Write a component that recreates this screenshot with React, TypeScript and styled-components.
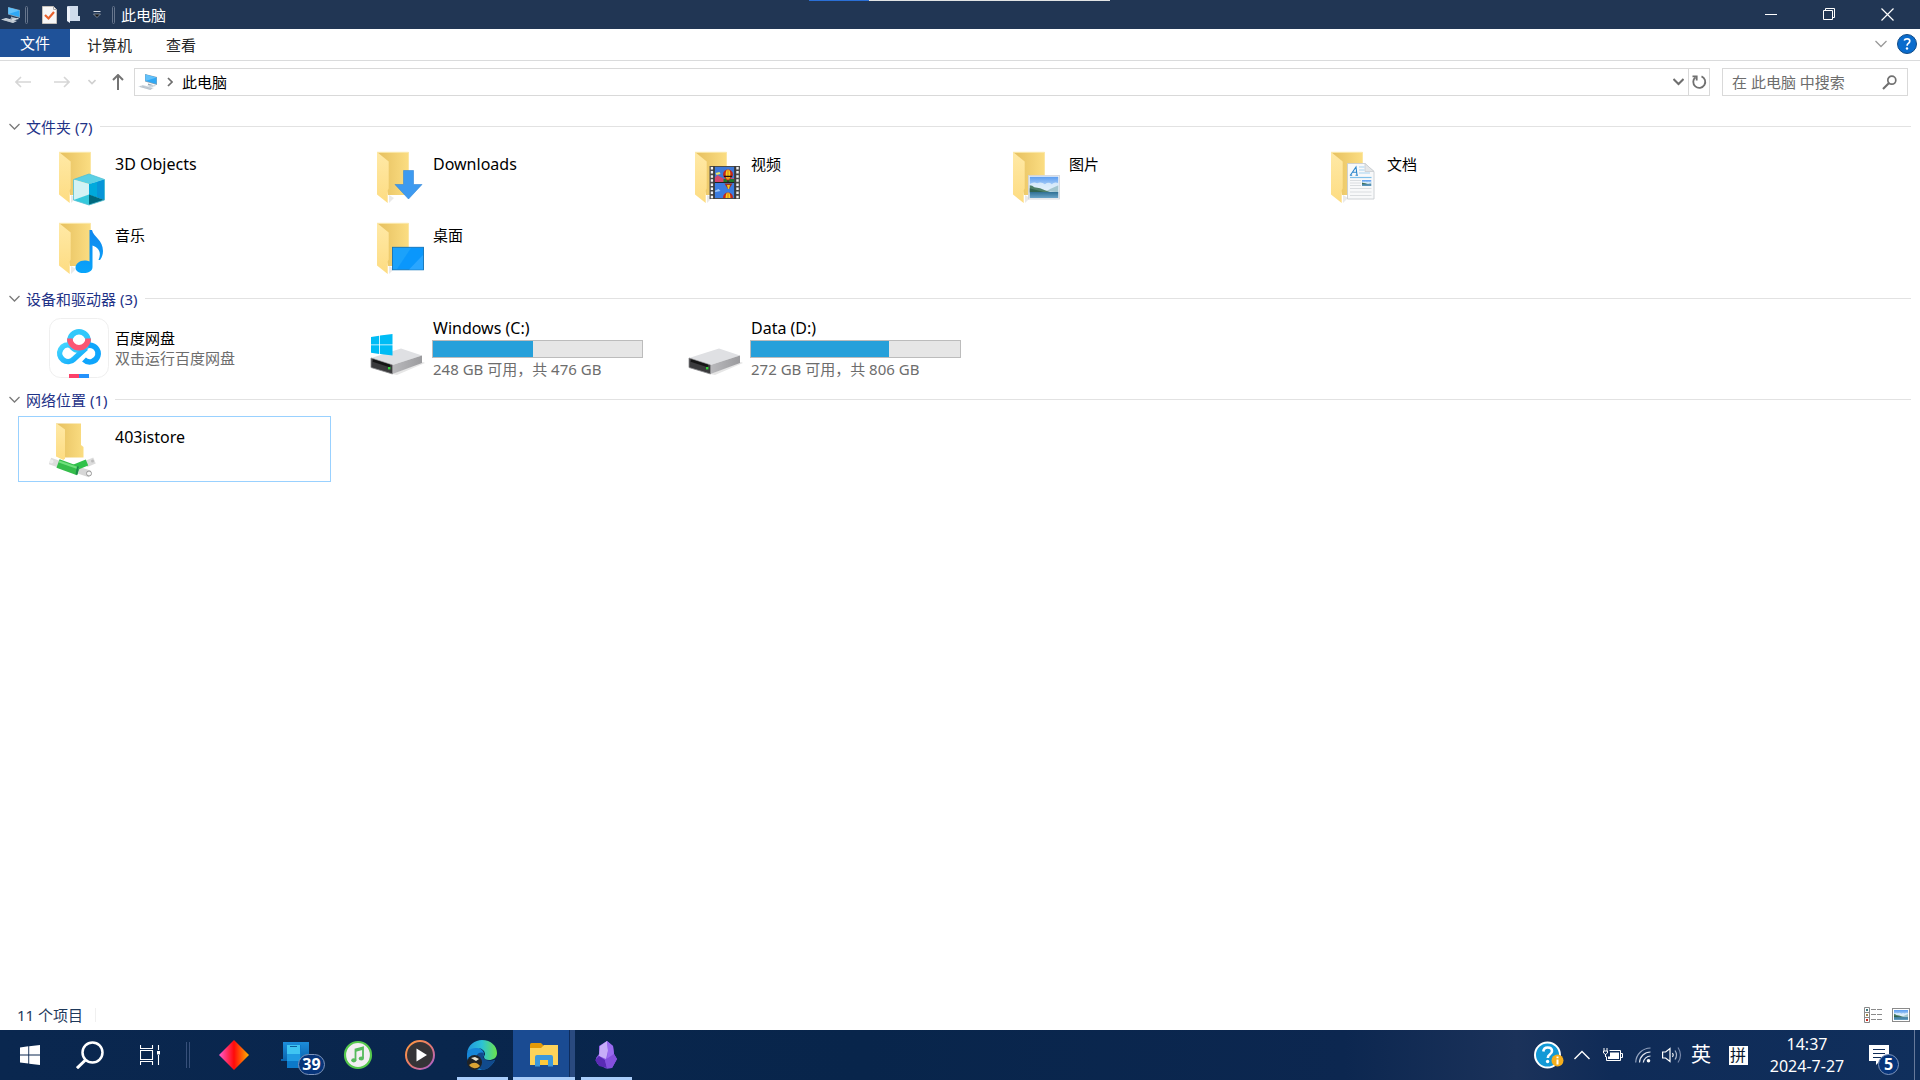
import React from "react";
import styled, { createGlobalStyle } from "styled-components";

const Global = createGlobalStyle`
  *, *::before, *::after { box-sizing: border-box; }
  body { margin: 0; background: #fff; }
  body, button, input {
    font-family: "Noto Sans", "Noto Sans CJK SC", sans-serif;
    font-size: 15px;
    line-height: 20px;
    color: #000;
  }
  button { border: 0; padding: 0; background: none; cursor: default; }
  svg { display: block; flex: none; }
`;

/* ---------- layout ---------- */

const Screen = styled.div`
  display: flex;
  flex-direction: column;
  min-height: 100vh;
`;

const TitleBar = styled.header`
  position: relative;
  display: flex;
  align-items: center;
  height: 29px;
  background: #213654;
  padding: 0 4px 0 1px;
`;

const SnapStrip = styled.div`
  position: absolute;
  top: 0;
  left: 50%;
  width: 301px;
  height: 1px;
  margin-left: -151px;
  background: linear-gradient(90deg, #2a6fd6 60px, #e2e4e4 60px);
`;

const TitleDivider = styled.span<{ $left: number; $right: number }>`
  width: 3px;
  height: 18px;
  margin: 0 ${(p) => p.$right}px 0 ${(p) => p.$left}px;
  border: 1px solid #66758c;
  border-radius: 2px;
`;

const QuickButton = styled.button`
  display: grid;
  place-items: center;
  width: 24px;
  height: 24px;
`;

const Title = styled.h1`
  margin: 0;
  flex: 1;
  font-size: 15px;
  font-weight: 400;
  line-height: 20px;
  color: #fff;
`;

const CaptionButton = styled.button`
  display: grid;
  place-items: center;
  width: 58px;
  height: 28px;
`;

const Ribbon = styled.nav`
  display: flex;
  align-items: flex-start;
  height: 32px;
  border-bottom: 1px solid #dadbdc;
`;

const RibbonTab = styled.button<{ $primary?: boolean }>`
  height: ${(p) => (p.$primary ? 28 : 31)}px;
  padding: 0 ${(p) => (p.$primary ? 20 : 17)}px;
  background: ${(p) => (p.$primary ? "#1f5299" : "transparent")};
  color: ${(p) => (p.$primary ? "#fff" : "#262626")};
`;

const RibbonTools = styled.div`
  display: flex;
  align-items: center;
  gap: 10px;
  height: 30px;
  margin-left: auto;
  padding-right: 3px;
`;

const NavRow = styled.div`
  display: flex;
  align-items: center;
  padding: 7px 12px 7px 4px;
`;

const NavButton = styled.button<{ $w: number }>`
  display: grid;
  place-items: center;
  width: ${(p) => p.$w}px;
  height: 28px;
`;

const AddressBox = styled.div`
  display: flex;
  align-items: center;
  flex: 1;
  height: 28px;
  margin-right: 12px;
  padding-left: 3px;
  border: 1px solid #d9d9d9;
`;

const Crumb = styled.button`
  margin-right: auto;
`;

const CrumbArrow = styled.button`
  display: grid;
  place-items: center;
  width: 24px;
  height: 26px;
`;

const AddressButton = styled.button<{ $divided?: boolean }>`
  display: grid;
  place-items: center;
  width: ${(p) => (p.$divided ? 21 : 20)}px;
  height: 26px;
  border-left: ${(p) => (p.$divided ? "1px solid #d9d9d9" : "0")};
`;

const SearchBox = styled.label`
  display: flex;
  align-items: center;
  width: 186px;
  height: 28px;
  padding: 0 10px 0 9px;
  border: 1px solid #d9d9d9;
`;

const SearchInput = styled.input`
  flex: 1;
  min-width: 0;
  padding: 0;
  border: 0;
  outline: 0;
  background: transparent;
  &::placeholder { color: #6d6d6d; opacity: 1; }
`;

const Content = styled.main`
  display: flex;
  flex-direction: column;
  gap: 2px;
  flex: 1;
  padding: 7px 9px 0 9px;
`;

const GroupHeader = styled.button`
  display: flex;
  align-items: center;
  width: 100%;
  height: 33px;
  color: #1e3287;
  &::after {
    content: "";
    flex: 1;
    height: 1px;
    margin-left: 8px;
    background: #e2e2e2;
  }
  svg { margin-right: 6px; }
`;

const ItemGrid = styled.div`
  display: grid;
  grid-template-columns: repeat(auto-fill, 313px);
  gap: 5px;
  padding-left: 9px;
`;

const Item = styled.button<{ $focused?: boolean; $middle?: boolean }>`
  display: flex;
  align-items: ${(p) => (p.$middle ? "center" : "flex-start")};
  gap: 4px;
  height: 66px;
  padding: ${(p) => (p.$middle ? 0 : 2)}px 0 0 30px;
  border: 1px solid ${(p) => (p.$focused ? "#99d1ff" : "transparent")};
  text-align: left;
`;

const ItemText = styled.span<{ $top?: boolean }>`
  display: flex;
  flex-direction: column;
  padding-top: ${(p) => (p.$top ? 8 : 0)}px;
`;

const ItemName = styled.span<{ $latin?: boolean }>`
  padding-left: 1px;
  font-size: ${(p) => (p.$latin ? 16 : 15)}px;
`;

const ItemNote = styled.span`
  padding-left: 1px;
  color: #6d6d6d;
`;

const Gauge = styled.span`
  display: block;
  width: 211px;
  height: 18px;
  margin: 2px 0 1px;
  border: 1px solid #bcbcbc;
  background: #e6e6e6;
`;

const GaugeFill = styled.span`
  display: block;
  height: 100%;
  background: #26a0da;
`;

const StatusBar = styled.footer`
  display: flex;
  align-items: center;
  height: 30px;
  padding: 0 10px 0 17px;
  color: #1e395b;
`;

const StatusText = styled.span`
  padding-right: 12px;
  margin-right: auto;
  border-right: 1px solid #f0f0f0;
  line-height: 14px;
`;

const StatusButton = styled.button`
  margin-left: 10px;
`;

const Taskbar = styled.footer`
  display: flex;
  height: 50px;
  background: linear-gradient(90deg, #0a274f 0%, #08254b 45%, #0c2750 70%, #1b325a 79%, #0f2b57 84%, #102f5c 100%);
`;

const TaskButton = styled.button<{ $w?: number; $state?: "open" | "active" }>`
  position: relative;
  display: grid;
  place-items: center;
  width: ${(p) => p.$w ?? 62}px;
  height: 50px;
  background: ${(p) =>
    p.$state === "active" ? "linear-gradient(90deg, #1a4b92 56px, #0e2c5c 56px, #0e2c5c 57px, #2a4a7f 57px)" : "transparent"};
  &::after {
    content: "";
    display: ${(p) => (p.$state ? "block" : "none")};
    position: absolute;
    bottom: 0;
    left: ${(p) => (p.$state === "active" ? 0 : 6)}px;
    right: ${(p) => (p.$state === "active" ? 0 : 5)}px;
    height: 3px;
    background: #a9cdfa;
  }
`;

const TaskDivider = styled.span`
  align-self: center;
  width: 4px;
  height: 26px;
  margin: 0 13px 0 6px;
  border: solid #37507a;
  border-width: 0 1px;
`;

const Badge = styled.span<{ $wide?: boolean }>`
  position: absolute;
  left: ${(p) => (p.$wide ? 33 : 24)}px;
  top: 24px;
  width: ${(p) => (p.$wide ? 27 : 21)}px;
  height: 21px;
  border: 1px solid #7f95bb;
  border-radius: 11px;
  background: #06347a;
  color: #fff;
  font-size: 16px;
  font-weight: 700;
  line-height: 18px;
  text-align: center;
`;

const Tray = styled.div`
  display: flex;
  align-items: center;
  margin-left: auto;
`;

const TrayButton = styled.button<{ $w: number; $inset?: number }>`
  position: relative;
  display: grid;
  place-items: center;
  width: ${(p) => p.$w}px;
  height: 50px;
  padding-right: ${(p) => p.$inset ?? 0}px;
  color: #fff;
  font-size: 20px;
`;

const ImeMode = styled.span`
  display: grid;
  place-items: center;
  width: 19px;
  height: 19px;
  background: #fff;
  color: #08182f;
  font-size: 16px;
  line-height: 19px;
`;

const Clock = styled.button`
  display: flex;
  flex-direction: column;
  align-items: center;
  width: 94px;
  color: #fff;
  font-size: 16px;
  line-height: 22px;
`;

const ShowDesktop = styled.button`
  width: 6px;
  height: 50px;
  border-left: 1px solid #66799a;
`;

/* ---------- small icons ---------- */

const PcIcon = () => (
  <svg width="20" height="18" viewBox="0 0 20 18">
    <path d="M7 1l12 3v8L7 8.500z" fill="#8fa2b0" />
    <path d="M7.500 1.500l11 3v6.500l-11-3z" fill="#2fa8f5" />
    <path d="M7.500 1.500l11 3-11 3.500z" fill="#62c1fa" />
    <path d="M10 10.500l5 1.500v2l-5-2z" fill="#9babb8" />
    <path d="M9 12.500l8-.500 1 1-6 1.500z" fill="#cfd8df" />
    <path d="M0 13.500l5-1.500 11 3-4 2z" fill="#d5dce3" />
    <path d="M2 13.500l11 3M4 13l10 2.700" stroke="#a9b5c0" strokeWidth=".6" />
  </svg>
);

const Chevron = ({ w = 11, color = "#7a7a7a", weight = 1.3, up = false }) => (
  <svg width={w} height={w / 2 + 2} viewBox={`0 0 ${w} ${w / 2 + 2}`} fill="none" stroke={color} strokeWidth={weight}>
    <path d={up ? `M.5 ${w / 2 + 1}L${w / 2} 1.500 ${w - 0.5} ${w / 2 + 1}` : `M.5 1L${w / 2} ${w / 2 + 0.5} ${w - 0.5} 1`} />
  </svg>
);

const Arrow = ({ dir }: { dir: "left" | "right" | "up" }) => {
  const turn = { left: 0, right: 180, up: 90 }[dir];
  const up = dir === "up";
  return (
    <svg width="16" height="16" viewBox="0 0 16 16" fill="none" stroke={up ? "#737373" : "#d6d6d6"} strokeWidth={up ? 2 : 1.6}>
      <path transform={`rotate(${turn} 8 8)`} d="M6 3L1 8l5 5M1 8h15" />
    </svg>
  );
};

const WindowGlyph = ({ kind }: { kind: "min" | "restore" | "close" }) => (
  <svg width="13" height="13" viewBox="0 0 13 13" fill="none" stroke="#fff" strokeWidth="1">
    {kind === "min" && <path d="M0 6.500h12" />}
    {kind === "restore" && <path d="M.5 2.500h9v9h-9zM2.500 2.500v-2h9v9h-2" />}
    {kind === "close" && <path d="M.5.5l12 12M12.500.5l-12 12" strokeWidth="1.200" />}
  </svg>
);

const Landscape = ({ x, y, w, h }: { x: number; y: number; w: number; h: number }) => (
  <svg x={x} y={y} width={w} height={h} viewBox="0 0 30 22" preserveAspectRatio="none">
    <rect width="30" height="22" fill="url(#sky)" />
    <path d="M0 8q4-3 8-1 4-2 8 1 4-3 7 0 3-3 7-1v8H0z" fill="#e3f1fb" opacity=".8" />
    <path d="M17 15l6-3 7-3v7z" fill="#a3c6cf" />
    <path d="M0 9q3 0 5 2l6 1 5 2 6 2H0z" fill="#4d7f68" />
    <path d="M0 12l8 2 8 2H0z" fill="#2f6350" />
    <path d="M0 15.800h30V22H0z" fill="url(#lake)" />
  </svg>
);

/* ---------- large icons, drawn in a 60 x 60 box ---------- */

const Big = ({ children }: { children: React.ReactNode }) => (
  <svg width="61" height="60" viewBox="0 0 61 60">{children}</svg>
);

const HiddenSvg = styled.svg`
  position: absolute;
`;

const Defs = () => (
  <HiddenSvg width="0" height="0" aria-hidden="true">
    <defs>
      <linearGradient id="sky" x2="0" y2="1"><stop offset="0" stopColor="#5a9cf0" /><stop offset=".6" stopColor="#cfe6fb" /></linearGradient>
      <linearGradient id="lake" x2="0" y2="1"><stop offset="0" stopColor="#2f6f93" /><stop offset="1" stopColor="#6aa4c8" /></linearGradient>
      <linearGradient id="fBack"><stop offset="0" stopColor="#e6c05f" /><stop offset="1" stopColor="#fbdd82" /></linearGradient>
      <linearGradient id="fFlap" x2="0" y2="1"><stop offset="0" stopColor="#ffe9a6" /><stop offset="1" stopColor="#fddc82" /></linearGradient>
      <linearGradient id="note" x2="0" y2="1"><stop offset="0" stopColor="#1187ee" /><stop offset="1" stopColor="#08a5fb" /></linearGradient>
      <linearGradient id="bdL" x2="1" y2="1"><stop offset="0" stopColor="#45d6ff" /><stop offset="1" stopColor="#0ba7fb" /></linearGradient>
      <linearGradient id="driveSide"><stop offset="0" stopColor="#b9b9bc" /><stop offset="1" stopColor="#9b9b9e" /></linearGradient>
      <linearGradient id="dia"><stop offset="0" stopColor="#ff5bd0" /><stop offset=".5" stopColor="#ff0a0a" /><stop offset="1" stopColor="#ffb300" /></linearGradient>
      <linearGradient id="ring" x2="1" y2="1"><stop offset="0" stopColor="#ff9a3c" /><stop offset=".5" stopColor="#e87a6c" /><stop offset="1" stopColor="#a05cd8" /></linearGradient>
      <linearGradient id="edgeTop"><stop offset="0" stopColor="#2196df" /><stop offset=".5" stopColor="#2cc2d6" /><stop offset="1" stopColor="#6be34a" /></linearGradient>
      <linearGradient id="phone" x2="0" y2="1"><stop offset="0" stopColor="#1c8ddb" /><stop offset="1" stopColor="#0a63ad" /></linearGradient>
    </defs>
  </HiddenSvg>
);

const FolderBase = () => (
  <>
    <path d="M22 49l5 3-5 5z" fill="#e9e9e9" />
    <path d="M10.500 6.500h31V49H21z" fill="url(#fBack)" />
    <path d="M10 6.300h31.500V49" fill="none" stroke="#fbe6a3" strokeWidth="1" />
    <path d="M10 6l11.700 9.500v27l-1 2V57L10 48.500z" fill="url(#fFlap)" />
  </>
);

const Objects3D = () => (
  <Big>
    <FolderBase />
    <path d="M40 28l15.500 5.500L40 38l-15.500-4.500z" fill="#5bd0e4" />
    <path d="M24.500 33.500L40 38v11l-15.500 5z" fill="#d3f2f5" />
    <path d="M40 38l15.500-4.500V54L40 49z" fill="#00a9dc" />
    <path d="M48 36l7.500-2.500V54L48 51z" fill="#0795d8" />
    <path d="M24.500 54L40 48.500V59z" fill="#35c9dc" />
    <path d="M40 48.500L55.500 54 40 59z" fill="#00697f" />
    <path d="M40 28l15.500 5.500V54L40 59l-15.500-5V33.500z" fill="none" stroke="#52bfd3" strokeWidth=".8" />
  </Big>
);

const Downloads = () => (
  <Big>
    <FolderBase />
    <path d="M36.500 24.500h10v14H55L41.500 53 28 38.500h8.500z" fill="#3d9af0" stroke="#3387d8" strokeWidth=".6" />
  </Big>
);

const Balloon = ({ x, y, s = 1 }: { x: number; y: number; s?: number }) => (
  <g transform={`translate(${x} ${y}) scale(${s})`}>
    <path d="M0-6a5.500 5.500 0 0 1 5.500 5.500C5.500 3 2 4 1.500 6h-3C-2 4-5.500 3-5.500-.5A5.500 5.500 0 0 1 0-6z" fill="#c4261c" />
    <path d="M-1.500-5.500Q-4-1-1.200 5h.9V-6zM1.500-5.500Q4-1 1.200 5H.3V-6z" fill="#f7d21e" />
    <path d="M-4.500 1.500h9" stroke="#22150c" strokeWidth="1.300" />
    <path d="M-1 6h2v2h-2z" fill="#333" />
  </g>
);

const Videos = () => (
  <Big>
    <FolderBase />
    <rect x="24.500" y="20" width="30.500" height="33" fill="#4b4b4b" />
    <svg x="29.500" y="21" width="20" height="31" viewBox="0 0 20 31">
      <rect width="20" height="15" fill="#3e78d8" />
      <path d="M0 11l3-3 3 2 4 2 10-1v4H0z" fill="#d4466a" />
      <path d="M9 12h11v3H9z" fill="#1e7a2c" />
      <path d="M1 6l4-1 1 2-4 1z" fill="#e8e56a" />
      <Balloon x={13.5} y={8} s={0.9} />
      <rect y="15.500" width="20" height="15.500" fill="#3b7ce0" />
      <path d="M0 24l4-2 2 2-5 1z" fill="#9fc6f5" />
      <path d="M10 16.500h8l-3 5h-2z" fill="#a33020" />
      <path d="M12.500 18h3l-1 4h-1z" fill="#f4c81e" />
      <Balloon x={13.5} y={31} s={0.9} />
      <path d="M0 15h20v1H0z" fill="#222" />
    </svg>
    <path d="M27 21v32M52.500 21v32" stroke="#f2f2f2" strokeWidth="2.400" strokeDasharray="2.500 1.600" />
    <path d="M29 20v33M50 20v33" stroke="#2b2b2b" strokeWidth="1" />
  </Big>
);

const Pictures = () => (
  <Big>
    <FolderBase />
    <rect x="25.400" y="29.500" width="31" height="23.500" fill="#f5f5f5" stroke="#cfd3da" strokeWidth=".8" />
    <Landscape x={26.5} y={30.5} w={29} h={21.5} />
  </Big>
);

const Documents = () => (
  <Big>
    <FolderBase />
    <path d="M26.500 17.500H44l9 8V53H26.500z" fill="#f8f9fa" stroke="#c9cdd1" strokeWidth=".9" />
    <path d="M44 17.500v8h9z" fill="#e4e6e8" stroke="#c9cdd1" strokeWidth=".8" />
    <path d="M29.500 29l5.500-8 1 8M31.500 26.300h4M28.800 29.200h2.400M34.500 29.200h2.500" stroke="#2b86cc" strokeWidth="1.100" fill="none" />
    <path d="M38 21h5.500M38 24h5.500M38 27h11" stroke="#a6d3f0" strokeWidth="1" />
    <path d="M29 31.500h21.500" stroke="#7fc0ea" strokeWidth="1.200" />
    <path d="M29 34.500h11M29 37h11M29 39.500h11M29 42.500h21.500M29 46h21.500M29 49.500h21.500" stroke="#dadde0" strokeWidth="1" />
    <Landscape x={41} y={34} w={9.5} h={6} />
  </Big>
);

const Music = () => (
  <Big>
    <FolderBase />
    <path d="M40.500 13H43c1.500 7 11 10 11 21 0 4-1.500 7-3 9h-1.500c3-7 1-12-6-14.500V50c0 4-4 6-9 6s-8-2-8-5.500 4-7 9-7c2 0 3.500.3 5 1z" fill="url(#note)" />
  </Big>
);

const Desktop = () => (
  <Big>
    <FolderBase />
    <rect x="25.500" y="30.300" width="31" height="22.500" fill="#0a97fc" stroke="#1273b8" strokeWidth=".9" />
    <path d="M26 31h18L30 52h-4z" fill="#1ba2fb" />
    <path d="M56 38v14.500H42z" fill="#2aa6ff" />
  </Big>
);

const BaiduDisk = () => (
  <Big>
    <rect x=".5" y=".5" width="59" height="59" rx="11" fill="#fff" stroke="#efefef" />
    <g fill="none" strokeWidth="5.500">
      <circle cx="30" cy="23" r="9.200" stroke="#32c8fb" />
      <path d="M37 30L25 41a8.300 8.300 0 1 1-3-13.500" stroke="url(#bdL)" />
      <path d="M35 41.500a8.300 8.300 0 1 0 4-14" stroke="#0ea5fc" />
      <path d="M20.800 20.500a9.200 9.200 0 1 0 18.400 0" stroke="#fb5673" />
    </g>
    <path d="M20 56h10v4H20z" fill="#fc4169" />
    <path d="M30 56h10v4H30z" fill="#2492fb" />
  </Big>
);

const Drive = ({ system }: { system?: boolean }) => (
  <Big>
    <path d="M25 56l31-12 2 1-28 12z" fill="#e6e6e6" />
    <path d="M4 40L34 30.500l21 7-29.500 9.500z" fill="#dfe0e3" />
    <path d="M25.500 47L55 37.500V45L25.500 56z" fill="url(#driveSide)" />
    <path d="M4 40l21.500 7v9L4 49.500z" fill="#3a3a3c" />
    <path d="M4 40l21.500 7v9L4 49.500z" fill="none" stroke="#8b8b8e" strokeWidth=".8" />
    <path d="M6 42.500l17 5.500" stroke="#151515" strokeWidth="2.500" />
    <rect x="21" y="49" width="2.400" height="2.400" fill="#35d43b" />
    {system && (
      <path d="M4 19l8.200-1.200v8.700H4zM13 17.600L25.500 16v10.500H13zM4 27.300h8.200V36L4 34.800zM13 27.300h12.500V37.500L13 36z" fill="#00bcf5" />
    )}
  </Big>
);

const NetworkPlace = () => (
  <Big>
    <path d="M7 4.500h25V26l2.500 2v10.500H15z" fill="url(#fBack)" />
    <path d="M7 4l9 6.500v29L14.500 41 7 37.500z" fill="url(#fFlap)" />
    <g fill="none" strokeLinecap="butt">
      <path d="M1 42l10 3.500" stroke="#dcdcdc" strokeWidth="7" />
      <path d="M37 45l8.500-3.500" stroke="#dcdcdc" strokeWidth="6.500" />
      <path d="M29 51l12 4" stroke="#d6d6d6" strokeWidth="7" />
      <path d="M22 50l16-6.500" stroke="#2fc14a" strokeWidth="6.500" />
      <path d="M9 44.500l20.500 7.500" stroke="#35bd4b" strokeWidth="9" />
      <path d="M10 42.500l20 7" stroke="#6fe07c" strokeWidth="2" />
      <path d="M29 47.500l-1.500 8" stroke="#1c8b48" strokeWidth="2" />
    </g>
    <circle cx="40" cy="54.500" r="2.500" fill="#f7f7f7" stroke="#9a9a9a" />
    <circle cx="2.500" cy="42.500" r="2" fill="#eee" />
    <circle cx="43.500" cy="42" r="1.500" fill="#bbb" />
  </Big>
);

/* ---------- data ---------- */

const folders = [
  { name: "3D Objects", latin: true, icon: <Objects3D /> },
  { name: "Downloads", latin: true, icon: <Downloads /> },
  { name: "视频", icon: <Videos /> },
  { name: "图片", icon: <Pictures /> },
  { name: "文档", icon: <Documents /> },
  { name: "音乐", icon: <Music /> },
  { name: "桌面", icon: <Desktop /> },
];

const drives = [
  { name: "Windows (C:)", free: 248, total: 476, system: true },
  { name: "Data (D:)", free: 272, total: 806, system: false },
];

const Group = ({ title, children }: { title: string; children: React.ReactNode }) => (
  <section>
    <GroupHeader aria-expanded="true">
      <Chevron />
      {title}
    </GroupHeader>
    <ItemGrid>{children}</ItemGrid>
  </section>
);

/* ---------- taskbar icons ---------- */

const StartIcon = () => (
  <svg width="20" height="20" viewBox="0 0 20 20" fill="#fff">
    <path d="M0 2.500L8.300 1.300v8.200H0zM9.200 1.200L20 0v9.500H9.200zM0 10.400h8.300v8.200L0 17.500zM9.200 10.400H20V20L9.200 18.700z" />
  </svg>
);

const SearchIcon = () => (
  <svg width="28" height="28" viewBox="0 0 28 28" fill="none" stroke="#fff">
    <circle cx="16.500" cy="11.500" r="10" strokeWidth="2.500" />
    <path d="M9.500 19L1 27.200" strokeWidth="3" />
  </svg>
);

const TaskViewIcon = () => (
  <svg width="20" height="20" viewBox="0 0 20 20" fill="none" stroke="#fff" strokeWidth="1.100">
    <path d="M.5 0v3.500h12V0M.5 20v-3.500h12V20M.5 5.500h12v9H.5zM18.500 0v5M18.500 10v10" />
    <path d="M17 6h3v3.500h-3z" fill="#fff" stroke="none" />
  </svg>
);

const DiamondIcon = () => (
  <svg width="30" height="30" viewBox="0 0 30 30"><path d="M15 0l15 15-15 15L0 15z" fill="url(#dia)" /></svg>
);

const PhoneIcon = () => (
  <svg width="30" height="28" viewBox="0 0 30 28">
    <path d="M2 1h26v19H0v-2h2z" fill="url(#phone)" />
    <path d="M6 4h14v23H6z" fill="#0c79c9" />
    <path d="M6 4h13v9H6z" fill="#3fc5f2" />
    <path d="M6 13h13v7H6z" fill="#1f9be2" />
    <path d="M9 5.500h7" stroke="#0d5f9b" />
  </svg>
);

const NoteIcon = () => (
  <svg width="30" height="30" viewBox="0 0 30 30">
    <circle cx="15" cy="15" r="13" fill="#f3eef3" stroke="#55c84c" strokeWidth="2.200" />
    <path d="M12.500 20V9.500l7.500-2V18" fill="none" stroke="#56ba5c" strokeWidth="1.800" />
    <path d="M12.500 10.500l7.500-2" stroke="#56ba5c" strokeWidth="2.500" />
    <ellipse cx="10.800" cy="20.300" rx="2.600" ry="2.100" fill="#56ba5c" />
    <ellipse cx="18.300" cy="18.500" rx="2.600" ry="2.100" fill="#56ba5c" />
  </svg>
);

const PlayerIcon = () => (
  <svg width="30" height="30" viewBox="0 0 30 30">
    <circle cx="15" cy="15" r="14" fill="#353437" stroke="url(#ring)" strokeWidth="2" />
    <path d="M11.500 8.500L22 15l-10.500 6.500z" fill="#fff" />
  </svg>
);

const EdgeIcon = () => (
  <svg width="30" height="30" viewBox="0 0 30 30">
    <path d="M0 14c0-4 6-8 12-6 5 2 6 6 4 9-1 5 5 6 12 3-3 6-8 10-14 10C6 30-1 23 0 14z" fill="#1686d8" />
    <path d="M10 15c2-3 6-3 7-1-3 5 3 8 11 6-3 6-8 10-13 10-5-2-8-9-5-15z" fill="#114a8c" />
    <path d="M0 13C1 5 8 0 15 0c9 0 15 6 15 13 0 5-4 7-8 7-3 0-5-1-5-3 0-1 1-2 1-3 0-3-3-6-8-6C5 8 1 10 0 13z" fill="url(#edgeTop)" />
    <circle cx="7.500" cy="22.500" r="7.500" fill="#1f2226" />
    <path d="M2 25q5-4 9-1l2 2a7 7 0 0 1-11-1z" fill="#d9a334" />
    <path d="M4 18l4-1 4 2-3 2z" fill="#e6e1ce" />
  </svg>
);

const ExplorerIcon = () => (
  <svg width="28" height="24" viewBox="0 0 28 24">
    <path d="M0 1.500Q0 0 1.500 0H11l3 3-2 3H0z" fill="#e29a08" />
    <path d="M0 5h11l3-3h14v20H0z" fill="#fdd35a" />
    <path d="M5 23.500V14q0-2 2-2h14q2 0 2 2v9.500h-5V17h-8v6.500z" fill="#3d98dc" />
    <path d="M10 17h8v5h-8z" fill="#fdc83c" />
  </svg>
);

const CrystalIcon = () => (
  <svg width="22" height="28" viewBox="0 0 22 28">
    <path d="M12 0l6 5 1 8 3 5-5 9-6 .5-9-5L1 17l3-4 0-8z" fill="#8a58e6" />
    <path d="M12 0L5 5l-1 10 7 3 2-8z" fill="#c7aef8" />
    <path d="M12 0l6 5 1 8-7 5 1-9z" fill="#9a6bf0" />
    <path d="M0 19l4-4 6 4 2 8-8-2z" fill="#5a2bb5" />
    <path d="M10 19l9-6 3 5-5 9-5 .5z" fill="#8450dd" />
  </svg>
);

const apps: { label: string; icon: React.ReactNode; state?: "open" | "active"; badge?: string }[] = [
  { label: "Diamond", icon: <DiamondIcon /> },
  { label: "Phone", icon: <PhoneIcon />, badge: "39" },
  { label: "Music", icon: <NoteIcon /> },
  { label: "Player", icon: <PlayerIcon /> },
  { label: "Edge", icon: <EdgeIcon />, state: "open" },
  { label: "Explorer", icon: <ExplorerIcon />, state: "active" },
  { label: "Obsidian", icon: <CrystalIcon />, state: "open" },
];

export default function App() {
  return (
    <Screen>
      <Global />
      <Defs />
      <TitleBar>
        <SnapStrip />
        <PcIcon />
        <TitleDivider $left={4} $right={9} />
        <QuickButton aria-label="属性">
          <svg width="15" height="18" viewBox="0 0 15 18">
            <path d="M.5.5h11l3 3v14H.5z" fill="#f7f7f7" stroke="#c5c0ba" />
            <path d="M11.500.5v3h3" fill="none" stroke="#aaa" />
            <path d="M3 9l3.500 3.500L12 6" fill="none" stroke="#e8612c" strokeWidth="2.200" />
          </svg>
        </QuickButton>
        <QuickButton aria-label="新建文件夹">
          <svg width="13" height="17" viewBox="0 0 13 17">
            <path d="M1 0h10v10h2v5H1z" fill="#cfdcec" />
            <path d="M0 0l3 2v15l-3-2z" fill="#eef4fb" />
          </svg>
        </QuickButton>
        <QuickButton aria-label="自定义快速访问工具栏">
          <svg width="8" height="7" viewBox="0 0 8 7">
            <path d="M.5.5h7" stroke="#d8dde5" />
            <path d="M.5 3h7L4 6.500z" fill="#111" stroke="#aab4c3" strokeWidth=".7" />
          </svg>
        </QuickButton>
        <TitleDivider $left={3} $right={6} />
        <Title>此电脑</Title>
        <CaptionButton aria-label="最小化"><WindowGlyph kind="min" /></CaptionButton>
        <CaptionButton aria-label="还原"><WindowGlyph kind="restore" /></CaptionButton>
        <CaptionButton aria-label="关闭"><WindowGlyph kind="close" /></CaptionButton>
      </TitleBar>

      <Ribbon>
        <RibbonTab $primary>文件</RibbonTab>
        <RibbonTab>计算机</RibbonTab>
        <RibbonTab>查看</RibbonTab>
        <RibbonTools>
          <button aria-label="展开功能区"><Chevron w={12} color="#9a9a9a" /></button>
          <button aria-label="帮助">
            <svg width="20" height="20" viewBox="0 0 20 20">
              <circle cx="10" cy="10" r="9.500" fill="#0a6ccd" stroke="#114b86" />
              <path d="M7.200 6.600q.6-1.800 2.900-1.800 2.700 0 2.700 2.300 0 1.400-1.500 2.300-1.200.8-1.200 2.300" fill="none" stroke="#fff" strokeWidth="1.700" />
              <circle cx="10" cy="14.500" r="1.200" fill="#fff" />
            </svg>
          </button>
        </RibbonTools>
      </Ribbon>

      <NavRow>
        <NavButton $w={38} aria-label="后退"><Arrow dir="left" /></NavButton>
        <NavButton $w={39} aria-label="前进"><Arrow dir="right" /></NavButton>
        <NavButton $w={21} aria-label="最近浏览的位置"><Chevron w={8} color="#d0d0d0" weight={1.6} /></NavButton>
        <NavButton $w={32} aria-label="向上"><Arrow dir="up" /></NavButton>
        <AddressBox>
          <PcIcon />
          <CrumbArrow aria-label="展开">
            <svg width="6" height="10" viewBox="0 0 6 10" fill="none" stroke="#6e6e6e" strokeWidth="1.700"><path d="M1 1l4 4-4 4" /></svg>
          </CrumbArrow>
          <Crumb>此电脑</Crumb>
          <AddressButton aria-label="以前的位置"><Chevron w={11} color="#6e6e6e" weight={2} /></AddressButton>
          <AddressButton $divided aria-label="刷新">
            <svg width="16" height="16" viewBox="0 0 16 16" fill="none" stroke="#707070" strokeWidth="1.800">
              <path d="M10.500 2.300A6 6 0 1 1 4.500 3.200" />
              <path d="M1.500 2.300h4.200v4.200" />
            </svg>
          </AddressButton>
        </AddressBox>
        <SearchBox>
          <SearchInput type="text" aria-label="搜索" placeholder="在 此电脑 中搜索" />
          <svg width="15" height="15" viewBox="0 0 15 15" fill="none" stroke="#707070">
            <circle cx="9.800" cy="5.200" r="4" strokeWidth="1.700" />
            <path d="M7 8L1 14" strokeWidth="2.200" />
          </svg>
        </SearchBox>
      </NavRow>

      <Content>
        <Group title="文件夹 (7)">
          {folders.map((f) => (
            <Item key={f.name}>
              {f.icon}
              <ItemText $top><ItemName $latin={f.latin}>{f.name}</ItemName></ItemText>
            </Item>
          ))}
        </Group>
        <Group title="设备和驱动器 (3)">
          <Item $middle>
            <BaiduDisk />
            <ItemText>
              <ItemName>百度网盘</ItemName>
              <ItemNote>双击运行百度网盘</ItemNote>
            </ItemText>
          </Item>
          {drives.map((d) => (
            <Item key={d.name} $middle>
              <Drive system={d.system} />
              <ItemText>
                <ItemName $latin>{d.name}</ItemName>
                <Gauge role="progressbar" aria-label={d.name} aria-valuenow={d.total - d.free} aria-valuemax={d.total}>
                  <GaugeFill style={{ width: `${((d.total - d.free) / d.total) * 100}%` }} />
                </Gauge>
                <ItemNote>{`${d.free} GB 可用，共 ${d.total} GB`}</ItemNote>
              </ItemText>
            </Item>
          ))}
        </Group>
        <Group title="网络位置 (1)">
          <Item $focused>
            <NetworkPlace />
            <ItemText $top><ItemName $latin>403istore</ItemName></ItemText>
          </Item>
        </Group>
      </Content>

      <StatusBar>
        <StatusText>11 个项目</StatusText>
        <StatusButton aria-label="详细信息">
          <svg width="18" height="16" viewBox="0 0 18 16" fill="none" stroke="#8a8a8a">
            <path d="M.5.5h5v15h-5zM.5 5.500h5M.5 10.500h5" />
            <path d="M7 2.500h5M13 2.500h5M7 7.500h5M13 7.500h5M7 12.500h5M13 12.500h5" />
            <path d="M2 2h2v2H2z" fill="#3d7a80" stroke="none" />
            <path d="M2 7h2v2H2z" fill="#a08a50" stroke="none" />
            <path d="M2 12h2v2H2z" fill="#c8281e" stroke="none" />
          </svg>
        </StatusButton>
        <StatusButton aria-label="大图标">
          <svg width="18" height="14" viewBox="0 0 18 14">
            <rect x=".5" y=".5" width="17" height="13" fill="#fff" stroke="#8a8a8a" />
            <Landscape x={2} y={2} w={14} h={10} />
          </svg>
        </StatusButton>
      </StatusBar>

      <Taskbar>
        <TaskButton $w={60} aria-label="开始"><StartIcon /></TaskButton>
        <TaskButton $w={60} aria-label="搜索"><SearchIcon /></TaskButton>
        <TaskButton $w={60} aria-label="任务视图"><TaskViewIcon /></TaskButton>
        <TaskDivider />
        {apps.map((a) => (
          <TaskButton key={a.label} aria-label={a.label} $state={a.state}>
            {a.icon}
            {a.badge && <Badge $wide>{a.badge}</Badge>}
          </TaskButton>
        ))}
        <Tray>
          <TrayButton $w={34} aria-label="提示">
            <svg width="30" height="28" viewBox="0 0 30 28">
              <circle cx="13.500" cy="14" r="12.500" fill="#1399d6" stroke="#fff" strokeWidth="2" />
              <path d="M9.300 10.500q.4-4 4.400-4 4.300 0 4.300 3.600 0 2-2.200 3.400-2 1.300-2 3.500" fill="none" stroke="#fff" strokeWidth="2.600" />
              <circle cx="13.600" cy="20.500" r="1.700" fill="#fff" />
              <circle cx="23.500" cy="19.500" r="6" fill="#f5ae1d" />
              <path d="M23.500 18.500v5M23.500 15.500v1.800" stroke="#fff" strokeWidth="2" />
            </svg>
          </TrayButton>
          <TrayButton $w={32} aria-label="显示隐藏的图标"><Chevron w={16} color="#fff" weight={1.4} up /></TrayButton>
          <TrayButton $w={30} aria-label="电池">
            <svg width="20" height="14" viewBox="0 0 20 14" fill="none" stroke="#fff">
              <path d="M6.500 2.500h11v10H3.500v-4" />
              <path d="M18 5.500h1.500v4H18" />
              <path d="M7 4.500h9v6.500H5V8.500h2z" fill="#fff" stroke="none" />
              <path d="M1 0v3M4 0v3M.5 3h4v2l-2 1.500-2-1.500zM2.500 6v3" />
            </svg>
          </TrayButton>
          <TrayButton $w={30} aria-label="网络">
            <svg width="16" height="16" viewBox="0 0 16 16" fill="none" stroke="#dfe4ee" strokeWidth="1.200">
              <path d="M.7 15.500A15 15 0 0 1 15.500 1" stroke="#94a3bf" />
              <path d="M4.500 15.500A11 11 0 0 1 15.500 5" />
              <path d="M8.300 15.500A7.500 7.500 0 0 1 15.500 9" />
              <circle cx="13.500" cy="13.800" r="1.800" fill="#fff" stroke="none" />
            </svg>
          </TrayButton>
          <TrayButton $w={28} aria-label="音量">
            <svg width="20" height="18" viewBox="0 0 20 18" fill="none" stroke="#fff" strokeWidth="1.200">
              <path d="M.6 6h3L8 2.500v13L3.600 12h-3z" />
              <path d="M10.500 7q1.500 2 0 4" />
              <path d="M13 4.500q3 4.500 0 9" stroke="#a9b5cb" />
              <path d="M16 1.500q5 7.500 0 15" stroke="#7586a8" />
            </svg>
          </TrayButton>
          <TrayButton $w={30} aria-label="输入法">英</TrayButton>
          <TrayButton $w={44} aria-label="拼音"><ImeMode>拼</ImeMode></TrayButton>
          <Clock>
            <span>14:37</span>
            <span>2024-7-27</span>
          </Clock>
          <TrayButton $w={60} $inset={10} aria-label="通知">
            <svg width="20" height="20" viewBox="0 0 20 20">
              <path d="M0 0h20v16h-9l-4 4v-4H0z" fill="#fff" />
              <path d="M4 4.500h12M4 8.500h12M4 12.500h8" stroke="#0f2b57" strokeWidth="1.200" />
            </svg>
            <Badge>5</Badge>
          </TrayButton>
          <ShowDesktop aria-label="显示桌面" />
        </Tray>
      </Taskbar>
    </Screen>
  );
}
